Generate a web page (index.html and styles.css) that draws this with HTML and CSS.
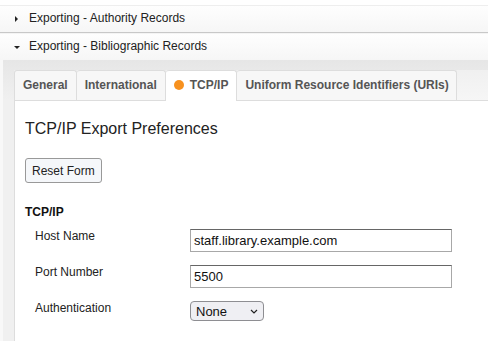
FILE: index.html
```html
<!DOCTYPE html>
<html lang="en">
<head>
    <meta charset="UTF-8">
    <meta name="viewport" content="width=device-width, initial-scale=1.0">
    <title>Exporting Preferences</title>
    <link rel="stylesheet" href="styles.css">
</head>
<body>
    <div class="accordion">
        <div class="acc-header">
            <span class="caret caret-right"></span>
            Exporting - Authority Records
        </div>
        <div class="acc-header open">
            <span class="caret caret-down"></span>
            Exporting - Bibliographic Records
        </div>
        <div class="acc-content">
            <ul class="tabs">
                <li class="tab">General</li>
                <li class="tab">International</li>
                <li class="tab active"><span class="dot"></span>TCP/IP</li>
                <li class="tab">Uniform Resource Identifiers (URIs)</li>
            </ul>
            <div class="tab-panel">
                <h2>TCP/IP Export Preferences</h2>
                <button class="btn">Reset Form</button>

                <h3>TCP/IP</h3>
                <div class="row">
                    <label for="host">Host Name</label>
                    <input id="host" type="text" value="staff.library.example.com">
                </div>
                <div class="row">
                    <label for="port">Port Number</label>
                    <input id="port" type="text" value="5500">
                </div>
                <div class="row">
                    <label for="auth">Authentication</label>
                    <span class="select-wrap">
                        <select id="auth">
                            <option>None</option>
                        </select>
                        <svg class="chevron" width="8" height="5" viewBox="0 0 8 5">
                            <path d="M1 1 L4 4 L7 1" fill="none" stroke="#222" stroke-width="1.2"/>
                        </svg>
                    </span>
                </div>
            </div>
        </div>
    </div>
</body>
</html>
```

FILE: styles.css
```css
body {
    margin: 0;
    background: #fff;
    font-family: "Liberation Sans", Arial, sans-serif;
    color: #222;
}
.accordion {
    padding-top: 5px;
}
.acc-header {
    height: 25px;
    line-height: 25px;
    padding-bottom: 1px;
    padding-left: 29px;
    position: relative;
    font-size: 12px;
    color: #222;
    border-top: 1px solid #eee;
    border-bottom: 1px solid #c8c8c8;
    background: linear-gradient(#fefefe, #f6f6f6);
}
.acc-header.open {
    border-top: 1px solid #f4f4f4;
    border-bottom: none;
}
.caret {
    position: absolute;
    width: 0;
    height: 0;
}
.caret-right {
    left: 15px;
    top: 10px;
    border-top: 3px solid transparent;
    border-bottom: 3px solid transparent;
    border-left: 3px solid #222;
}
.caret-down {
    left: 14px;
    top: 12px;
    border-left: 3px solid transparent;
    border-right: 3px solid transparent;
    border-top: 3px solid #222;
}
.acc-content {
    background: linear-gradient(#e6e6e6, #f0f0f0 40px);
    padding: 10px 0 0 11px;
    border-left: 3px solid #f8f8f8;
}
.tabs {
    list-style: none;
    margin: 0;
    padding: 0;
    display: flex;
    height: 30px;
    background: linear-gradient(#f0f0f0, #f6f6f6);
}
.tab {
    padding: 0 8px;
    line-height: 29px;
    font-size: 12px;
    font-weight: bold;
    color: #555;
    background: #f7f7f7;
    border: 1px solid #ddd;
    border-bottom: none;
    border-left: none;
    border-radius: 3px 3px 0 0;
}
.tab:first-child {
    border-left: 1px solid #ddd;
}
.tab:last-child {
    padding-right: 7px;
}
.tab.active {
    background: #fff;
    height: 30px;
}
.dot {
    display: inline-block;
    width: 10px;
    height: 10px;
    border-radius: 50%;
    background: #f7911e;
    margin-right: 6px;
    vertical-align: -1px;
}
.tab-panel {
    background: #fff;
    border-left: 1px solid #ddd;
    border-top: 1px solid #ddd;
    padding: 18px 10px 0;
    height: 223px;
}
h2 {
    margin: 0 0 20px;
    font-size: 16px;
    font-weight: normal;
    color: #222;
    line-height: 19px;
}
.btn {
    display: block;
    font-family: "Liberation Sans", Arial, sans-serif;
    font-size: 12px;
    color: #222;
    background: #f5f7fa;
    border: 1px solid #999;
    border-radius: 3px;
    height: 25px;
    padding: 0 6px;
}
h3 {
    margin: 22px 0 0;
    font-size: 12px;
    font-weight: bold;
    color: #111;
    line-height: 14px;
}
.row {
    display: flex;
    align-items: flex-start;
    margin-top: 13px;
    height: 23px;
}
h3 + .row {
    margin-top: 10px;
}
label {
    width: 155px;
    padding-left: 10px;
    font-size: 12px;
    color: #222;
    line-height: 14px;
}
input {
    width: 254px;
    height: 17px;
    padding: 2px 3px;
    margin: 0;
    border: 1px solid #a8a8a8;
    border-top-color: #666;
    font-family: "Liberation Sans", Arial, sans-serif;
    font-size: 13px;
    color: #111;
}
.select-wrap {
    position: relative;
    display: block;
}
select {
    appearance: none;
    display: block;
    margin: 0;
    font-family: "Liberation Sans", Arial, sans-serif;
    font-size: 13px;
    color: #111;
    width: 74px;
    height: 20px;
    padding: 0 0 0 5px;
    background: #efeff3;
    border: 1px solid #8e8e92;
    border-radius: 4px;
}
.chevron {
    position: absolute;
    left: 60px;
    top: 8px;
    pointer-events: none;
}
```
